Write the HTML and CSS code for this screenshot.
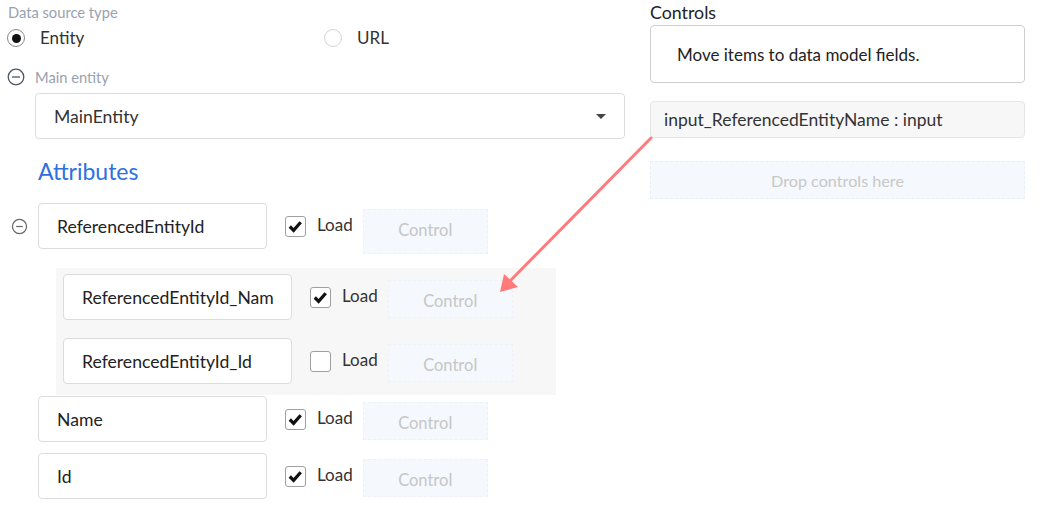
FILE: index.html
```html
<!DOCTYPE html>
<html>
<head>
<meta charset="utf-8">
<link rel="stylesheet" href="styles.css">
</head>
<body>
<div class="page">
  <div class="left">
    <div class="small-label ds-label">Data source type</div>
    <div class="radios">
      <div class="radio checked"><span class="dot"></span><span>Entity</span></div>
      <div class="radio"><span class="dot"></span><span>URL</span></div>
    </div>
    <div class="section-head">
      <svg class="minus big" viewBox="0 0 18 18"><circle cx="9" cy="9" r="7.8"/><line x1="5" y1="9" x2="13" y2="9"/></svg>
      <span class="small-label">Main entity</span>
    </div>
    <div class="select"><span>MainEntity</span><span class="caret"></span></div>
    <div class="attr-title">Attributes</div>

    <div class="attr-row first">
      <span class="gutter"><svg class="minus" viewBox="0 0 18 18"><circle cx="9" cy="9" r="7.5"/><line x1="5.5" y1="9" x2="12.5" y2="9"/></svg></span>
      <div class="field">ReferencedEntityId</div>
      <span class="cb checked"><svg viewBox="0 0 20 20"><path d="M4 10 L8 14 L15.5 5.5"/></svg></span>
      <span class="load">Load</span>
      <div class="control tall">Control</div>
    </div>

    <div class="nested">
      <div class="attr-row">
        <div class="field">ReferencedEntityId_Nam</div>
        <span class="cb checked"><svg viewBox="0 0 20 20"><path d="M4 10 L8 14 L15.5 5.5"/></svg></span>
        <span class="load">Load</span>
        <div class="control">Control</div>
      </div>
      <div class="attr-row">
        <div class="field">ReferencedEntityId_Id</div>
        <span class="cb"></span>
        <span class="load">Load</span>
        <div class="control">Control</div>
      </div>
    </div>

    <div class="attr-row name-row">
      <span class="gutter"></span>
      <div class="field">Name</div>
      <span class="cb checked"><svg viewBox="0 0 20 20"><path d="M4 10 L8 14 L15.5 5.5"/></svg></span>
      <span class="load">Load</span>
      <div class="control">Control</div>
    </div>
    <div class="attr-row id-row">
      <span class="gutter"></span>
      <div class="field">Id</div>
      <span class="cb checked"><svg viewBox="0 0 20 20"><path d="M4 10 L8 14 L15.5 5.5"/></svg></span>
      <span class="load">Load</span>
      <div class="control">Control</div>
    </div>
  </div>

  <div class="right">
    <div class="controls-title">Controls</div>
    <div class="hint">Move items to data model fields.</div>
    <div class="item">input_ReferencedEntityName : input</div>
    <div class="drop">Drop controls here</div>
  </div>

  <svg class="arrow" viewBox="0 0 1041 509" width="1041" height="509">
    <line x1="651" y1="138" x2="509" y2="282" stroke="#ff7b7b" stroke-width="3" stroke-linecap="round"/>
    <polygon points="500,292 504,274 518,287" fill="#ff7b7b"/>
  </svg>
</div>
</body>
</html>
```

FILE: styles.css
```css
* { box-sizing: border-box; }
html, body { margin: 0; padding: 0; background: #fff; }
body {
  font-family: Lato, "Open Sans", sans-serif;
  color: #2b2b2b;
  font-size: 17px;
}
.page {
  position: relative;
  width: 1041px;
  height: 509px;
  display: flex;
  gap: 25px;
  overflow: hidden;
}
.left {
  width: 625px;
  padding-top: 3px;
}
.small-label {
  font-size: 14.7px;
  line-height: 18px;
  color: #98a1b2;
}
.ds-label { margin-left: 8px; }
.radios {
  display: grid;
  grid-template-columns: 317px 1fr;
  margin-top: 7px;
  margin-left: 7px;
  height: 20px;
}
.radio {
  display: flex;
  align-items: center;
  gap: 15px;
  font-size: 17px;
  line-height: 20px;
  color: #333;
}
.radio .dot {
  width: 18px;
  height: 18px;
  border-radius: 50%;
  border: 1px solid #d4d4d4;
  display: flex;
  align-items: center;
  justify-content: center;
  flex: none;
}
.radio.checked .dot { border-color: #8a8a8a; }
.radio.checked .dot::after {
  content: "";
  width: 9px;
  height: 9px;
  border-radius: 50%;
  background: #111;
}
.section-head {
  display: flex;
  align-items: center;
  gap: 10px;
  margin-top: 20px;
  margin-left: 7px;
  height: 18px;
}
.minus {
  width: 18px;
  height: 18px;
  fill: none;
  stroke: #4d5563;
  stroke-width: 1.3;
}
.select {
  margin-top: 7px;
  margin-left: 35px;
  height: 46px;
  border: 1px solid #dcdcdc;
  border-radius: 4px;
  display: flex;
  align-items: center;
  justify-content: space-between;
  padding: 0 18px 0 18px;
  font-size: 17.6px;
  color: #333;
}
.caret {
  width: 0;
  height: 0;
  border-left: 5px solid transparent;
  border-right: 5px solid transparent;
  border-top: 5px solid #444;
}
.attr-title {
  margin-top: 18px;
  margin-left: 38px;
  font-size: 23px;
  line-height: 28px;
  color: #2f6fe0;
}
.attr-row {
  display: flex;
  align-items: flex-start;
}
.attr-row.first { margin-top: 18px; }
.gutter {
  width: 38px;
  height: 46px;
  display: flex;
  align-items: center;
  justify-content: center;
  flex: none;
}
.gutter .minus { width: 17px; height: 17px; stroke: #666; }
.field {
  width: 229px;
  height: 46px;
  border: 1px solid #dcdcdc;
  border-radius: 4px;
  background: #fff;
  display: flex;
  align-items: center;
  padding-left: 18px;
  font-size: 17.6px;
  color: #222;
  white-space: nowrap;
  overflow: hidden;
  flex: none;
}
.cb {
  width: 21px;
  height: 21px;
  margin-top: 13px;
  margin-left: 18px;
  border: 1px solid #a0a0a0;
  border-radius: 3px;
  background: #fff;
  flex: none;
  display: flex;
}
.cb svg {
  width: 19px;
  height: 19px;
  fill: none;
  stroke: #111;
  stroke-width: 3.4;
}
.load {
  margin-left: 11px;
  margin-top: 12px;
  font-size: 17px;
  line-height: 20px;
  color: #333;
}
.control {
  margin-left: 10px;
  margin-top: 6px;
  width: 125px;
  height: 38px;
  background: #f5f8fd;
  border: 1px dashed #eef2f8;
  display: flex;
  justify-content: center;
  padding-top: 10px;
  font-size: 16.5px;
  line-height: 20px;
  color: #c6c6c6;
}
.control.tall { height: 45px; }
.nested {
  margin-top: 14px;
  margin-left: 56px;
  width: 500px;
  background: #f7f7f7;
  padding: 6px 0 11px 7px;
  display: flex;
  flex-direction: column;
  gap: 18px;
}
.name-row { margin-top: 1px; }
.id-row { margin-top: 11px; }
.right {
  width: 375px;
  padding-top: 2px;
}
.controls-title {
  font-size: 17.8px;
  line-height: 21px;
  color: #222;
}
.hint {
  margin-top: 2px;
  height: 58px;
  border: 1px solid #cfcfcf;
  border-radius: 4px;
  display: flex;
  align-items: center;
  padding-left: 26px;
  font-size: 17px;
  color: #222;
}
.item {
  margin-top: 18px;
  height: 37px;
  background: #f7f7f7;
  border: 1px solid #e6e6e6;
  border-radius: 4px;
  display: flex;
  align-items: center;
  padding-left: 13px;
  font-size: 17.5px;
  color: #333;
}
.drop {
  margin-top: 23px;
  height: 38px;
  background: #f5f8fd;
  border: 1px dashed #e9eef7;
  display: flex;
  align-items: center;
  justify-content: center;
  font-size: 16.2px;
  color: #c8c8c8;
}
.arrow {
  position: absolute;
  left: 0;
  top: 0;
  pointer-events: none;
}
```
